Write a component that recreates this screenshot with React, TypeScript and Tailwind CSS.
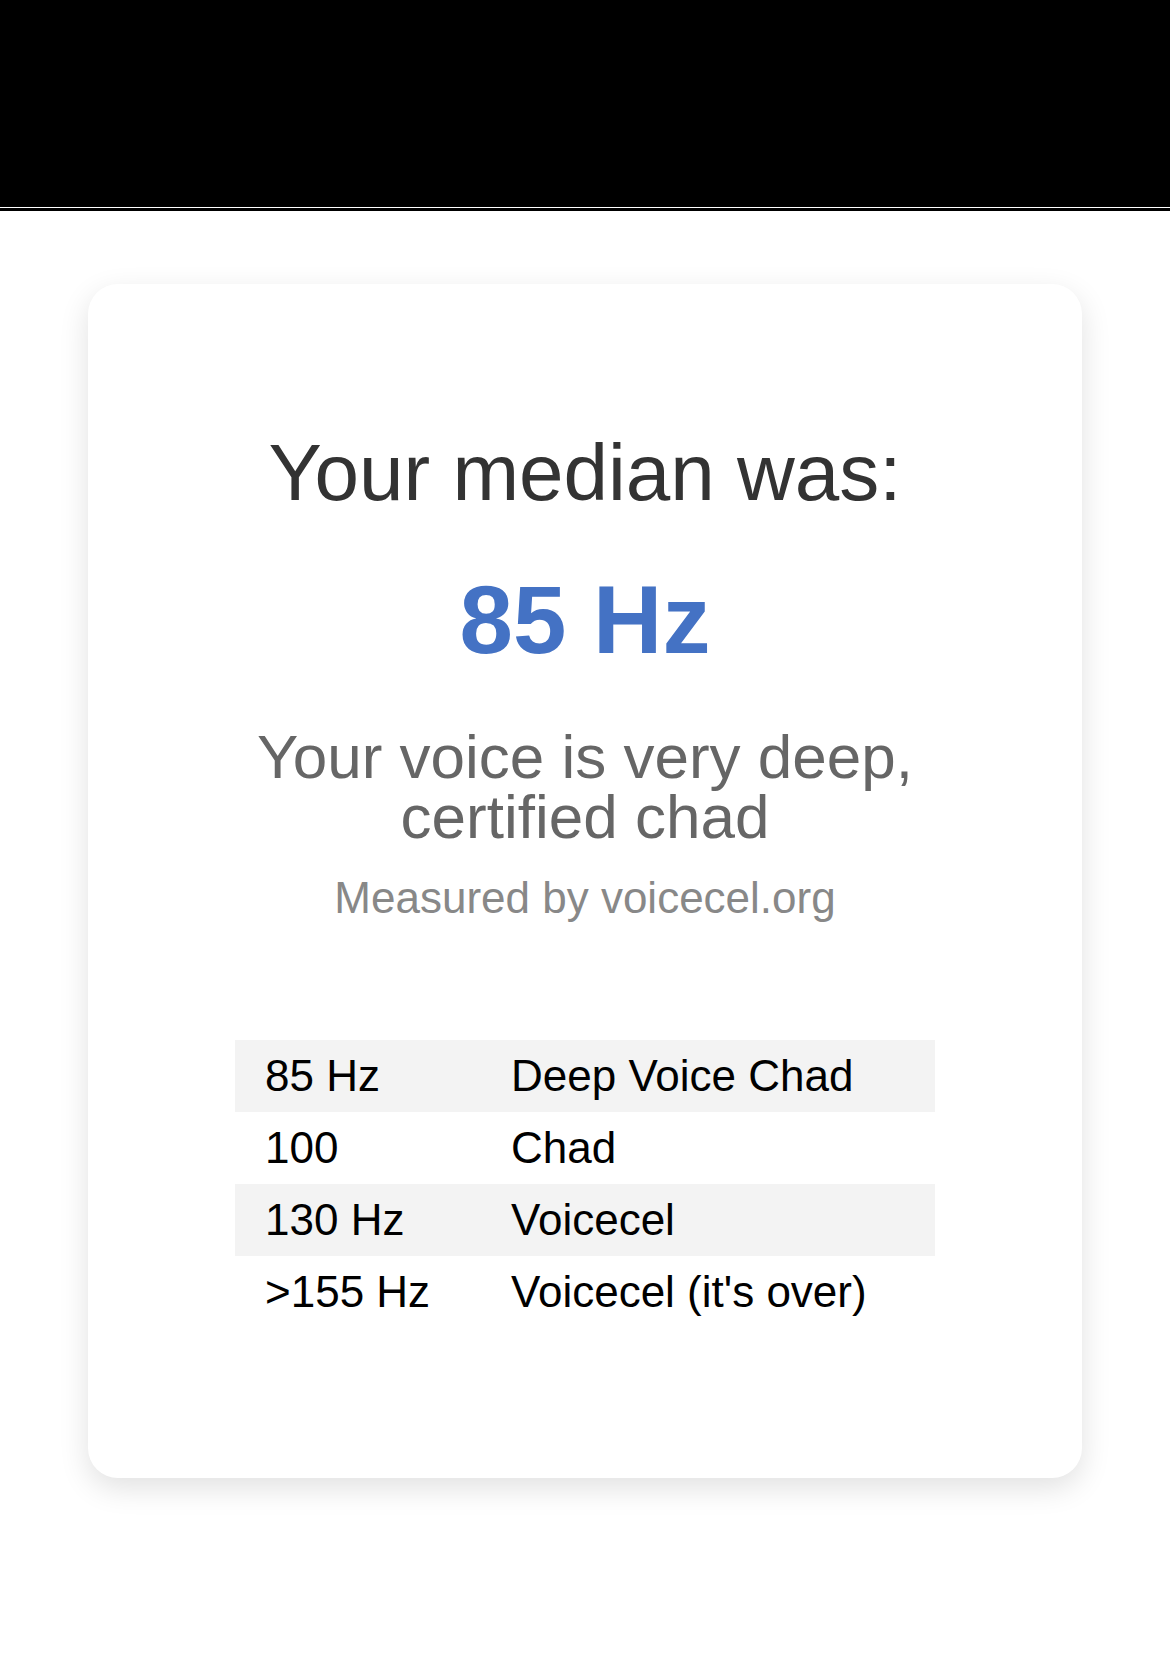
const ranges = [
  { hz: "85 Hz", label: "Deep Voice Chad" },
  { hz: "100", label: "Chad" },
  { hz: "130 Hz", label: "Voicecel" },
  { hz: ">155 Hz", label: "Voicecel (it's over)" },
];

export default function App() {
  return (
    <div className="min-h-[1659px] bg-white font-['Liberation_Sans',Arial,sans-serif]">
      <header className="bg-black">
        <div className="h-[207px]" />
        <div className="h-[1px] bg-white" />
        <div className="h-[3px]" />
      </header>

      <main className="px-[88px] pt-[73px]">
        <div className="rounded-[30px] bg-white pt-[144px] pb-[150px] shadow-[0_10px_30px_rgba(0,0,0,0.12)] text-center">
          <h2 className="text-[80px] leading-[90px] text-[#333333]">Your median was:</h2>
          <div className="mt-[47px] text-[96px] leading-[110px] font-bold text-[#4472c4]">85 Hz</div>
          <p className="mt-[52px] mx-auto w-[720px] text-[62px] leading-[60px] text-[#666666]">
            Your voice is very deep, certified chad
          </p>
          <p className="mt-[26px] text-[44px] leading-[50px] text-[#888888]">Measured by voicecel.org</p>

          <div className="mx-auto mt-[117px] w-[700px] text-left text-[44px] text-black">
            {ranges.map((r, i) => (
              <div
                key={r.hz}
                className={
                  "grid h-[72px] grid-cols-[246px_1fr] items-center " +
                  (i % 2 === 0 ? "bg-[#f3f3f3]" : "bg-white")
                }
              >
                <span className="pl-[30px]">{r.hz}</span>
                <span className="pl-[30px]">{r.label}</span>
              </div>
            ))}
          </div>
        </div>
      </main>
    </div>
  );
}
